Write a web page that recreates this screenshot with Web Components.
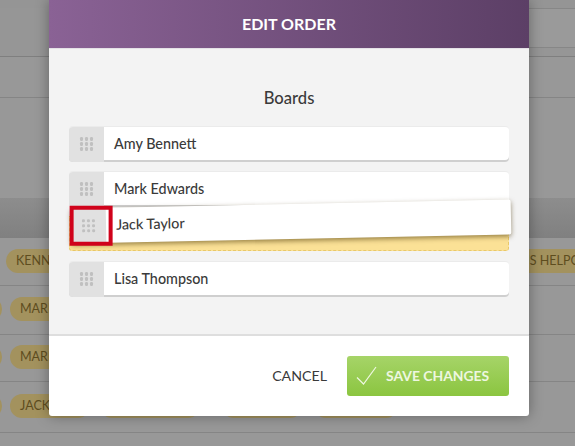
<!DOCTYPE html>
<html>
<head>
<meta charset="utf-8">
<style>
  html, body { margin: 0; padding: 0; background: #999; }
  body { width: 575px; height: 446px; overflow: hidden; font-family: Lato, sans-serif; }
</style>
</head>
<body>
<order-page>
  <bg-row slot="bg" h="8" kind="top"></bg-row>
  <bg-row slot="bg" h="49" kind="box"></bg-row>
  <bg-row slot="bg" h="41"></bg-row>
  <bg-row slot="bg" h="100" kind="plain"></bg-row>
  <bg-row slot="bg" h="40" kind="band"></bg-row>
  <bg-row slot="bg" h="48" pad="6" top="11">
    <bg-chip w="80">KENNEDY</bg-chip><bg-chip w="120" style="margin-left:411px">PLUS HELPCENTER</bg-chip>
  </bg-row>
  <bg-row slot="bg" h="49" top="11"><bg-chip w="24" style="margin-left:-22px"></bg-chip><bg-chip w="80" style="margin-left:8px">MARK</bg-chip></bg-row>
  <bg-row slot="bg" h="47" top="10"><bg-chip w="24" style="margin-left:-22px"></bg-chip><bg-chip w="80" style="margin-left:8px">MARK</bg-chip></bg-row>
  <bg-row slot="bg" h="51" top="12">
    <bg-chip w="24" style="margin-left:-22px"></bg-chip><bg-chip w="80" style="margin-left:8px">JACK</bg-chip><bg-chip w="100" style="margin-left:10px"></bg-chip><bg-chip w="80" style="margin-left:22px"></bg-chip><bg-chip w="84" style="margin-left:12px"></bg-chip>
  </bg-row>
  <bg-row slot="bg" h="13" kind="plain"></bg-row>

  <edit-modal slot="modal" heading="EDIT ORDER" subheading="Boards">
    <board-row>Amy Bennett</board-row>
    <board-row>Mark Edwards</board-row>
    <drop-slot>
      <drag-row>Jack Taylor</drag-row>
    </drop-slot>
    <board-row>Lisa Thompson</board-row>
    <save-button slot="actions">SAVE CHANGES</save-button>
  </edit-modal>
</order-page>

<script>
  class OrderPage extends HTMLElement {
    constructor() {
      super();
      this.attachShadow({ mode: 'open' });
      this.shadowRoot.innerHTML = `
        <style>
          :host { display: block; position: relative; width: 575px; height: 446px; overflow: hidden; background: #999; }
          .bg { display: flex; flex-direction: column; }
        </style>
        <div class="bg"><slot name="bg"></slot></div>
        <slot name="modal"></slot>
      `;
    }
  }

  class BgRow extends HTMLElement {
    constructor() {
      super();
      this.attachShadow({ mode: 'open' });
    }

    connectedCallback() {
      const h = this.getAttribute('h');
      const pad = this.getAttribute('pad') || 0;
      const top = this.getAttribute('top') || 0;
      const kind = this.getAttribute('kind') || 'row';
      this.shadowRoot.innerHTML = `
        <style>
          :host { display: block; box-sizing: border-box; height: ${h}px; overflow: hidden; background: #989898; }
          :host([kind="top"]) { background: #959595; }
          :host([kind="box"]) { background: #969696; border-bottom: 1px solid #7f7f7f; }
          :host([kind="row"]), :host(:not([kind])) { border-bottom: 1px solid #858585; }
          :host([kind="band"]) { background: linear-gradient(#8d8d8d, #808080); }
          .row { display: flex; align-items: flex-start; padding: ${top}px 0 0 ${pad}px; white-space: nowrap; }
          .box { margin: 0 0 0 500px; height: 38px; border: 1px solid #878787; border-right: 0; border-radius: 8px 0 0 8px; background: #9a9a9a; }
        </style>
        ${kind === 'box' ? '<div class="box"></div>' : '<div class="row"><slot></slot></div>'}
      `;
    }
  }

  class BgChip extends HTMLElement {
    constructor() {
      super();
      this.attachShadow({ mode: 'open' });
    }

    connectedCallback() {
      this.shadowRoot.innerHTML = `
        <style>
          :host { display: block; flex: none; box-sizing: border-box; width: ${this.getAttribute('w')}px; height: 24px; padding: 0 10px; border-radius: 12px; background: #a3925e; color: #5e4d1e; font: 12.5px/24px Lato, sans-serif; overflow: hidden; }
        </style>
        <slot></slot>
      `;
    }
  }

  class EditModal extends HTMLElement {
    constructor() {
      super();
      this.attachShadow({ mode: 'open' });
    }

    connectedCallback() {
      this.shadowRoot.innerHTML = `
        <style>
          :host { display: flex; flex-direction: column; position: absolute; left: 49px; top: 0; width: 480px; height: 416px; background: #fff; border-radius: 0 0 3px 3px; box-shadow: 0 0 14px rgba(0,0,0,.35); color: #333; }
          header { height: 49px; flex: none; box-sizing: border-box; border-bottom: 1px solid #e4e1e6; background: linear-gradient(90deg, #8a6295, #5c3f66); color: #fff; font: 700 16px/47px Lato, sans-serif; text-align: center; }
          .body { flex: 1; display: flex; flex-direction: column; gap: 9px; padding: 0 20px; background: #f3f3f3; border-bottom: 2px solid #dedede; }
          h2 { margin: 39px 0 9px; font: 500 16.6px/20px Lato, sans-serif; text-align: center; color: #3a3a3a; }
          footer { height: 80px; flex: none; display: flex; align-items: center; justify-content: flex-end; gap: 20px; padding-right: 20px; }
          .cancel { font: 400 14.2px/20px Lato, sans-serif; color: #3a3a3a; }
        </style>
        <header>${this.getAttribute('heading')}</header>
        <div class="body">
          <h2>${this.getAttribute('subheading')}</h2>
          <slot></slot>
        </div>
        <footer><span class="cancel">CANCEL</span><slot name="actions"></slot></footer>
      `;
    }
  }

  const rowStyles = `
    .handle { flex: none; width: 35px; display: flex; align-items: center; justify-content: center; background: #e1e1e1; }
    .dots { display: grid; grid-template-columns: repeat(3, 3.6px); grid-auto-rows: 3.6px; gap: 1.6px; }
    .dots i { background: #c0c0c0; border-radius: 1.2px; }
    .name { font: 500 14.35px/33px Lato, sans-serif; color: #3a3a3a; padding-left: 10px; }
  `;
  const handleHtml = `<div class="handle"><div class="dots">${'<i></i>'.repeat(9)}</div></div>`;

  class BoardRow extends HTMLElement {
    constructor() {
      super();
      this.attachShadow({ mode: 'open' });
      this.shadowRoot.innerHTML = `
        <style>
          :host { display: flex; box-sizing: border-box; height: 36px; background: #fff; border-radius: 4px; overflow: hidden; border-top: 1px solid #ebebeb; box-shadow: inset 0 -2px 0 #cfcfcf; }
          ${rowStyles}
          .handle { padding-bottom: 1px; }
        </style>
        ${handleHtml}
        <div class="name"><slot></slot></div>
      `;
    }
  }

  class DropSlot extends HTMLElement {
    constructor() {
      super();
      this.attachShadow({ mode: 'open' });
      this.shadowRoot.innerHTML = `
        <style>
          :host { display: block; position: relative; box-sizing: border-box; height: 35px; margin-bottom: 1px; background: #fbe196; border: 1px dashed #e9c869; border-top: 0; border-radius: 0 0 3px 3px; }
        </style>
        <slot></slot>
      `;
    }
  }

  // dragged copy of a row, floats tilted over the drop slot
  class DragRow extends HTMLElement {
    constructor() {
      super();
      this.attachShadow({ mode: 'open' });
      this.shadowRoot.innerHTML = `
        <style>
          :host { display: flex; position: absolute; left: 1px; top: -12px; width: 440px; height: 35px; background: #fff; transform: rotate(-1.2deg); border-radius: 2px; box-shadow: 0 2px 5px rgba(70,50,0,.55); }
          ${rowStyles}
          .name { padding-left: 10px; }
          .mark { position: absolute; left: -1px; top: -3px; width: 43px; height: 40px; box-sizing: border-box; border: 4px solid #d0021b; transform: rotate(1.2deg); transform-origin: 0 0; }
        </style>
        ${handleHtml}
        <div class="name"><slot></slot></div>
        <div class="mark"></div>
      `;
    }
  }

  class SaveButton extends HTMLElement {
    constructor() {
      super();
      this.attachShadow({ mode: 'open' });
      this.shadowRoot.innerHTML = `
        <style>
          :host { display: flex; align-items: center; box-sizing: border-box; width: 162px; height: 40px; padding-left: 9px; gap: 9px; border-radius: 3px; background: linear-gradient(#a6d468, #8bc540); color: #eef7e0; font: 700 13.9px/20px Lato, sans-serif; }
          svg { flex: none; display: block; }
        </style>
        <svg width="21" height="20" viewBox="0 0 21 20" fill="none" stroke="#eef7e0" stroke-width="1.2"><path d="M1 11.5l6.5 6.5L20 1"/></svg>
        <span><slot></slot></span>
      `;
    }
  }

  customElements.define('order-page', OrderPage);
  customElements.define('bg-row', BgRow);
  customElements.define('bg-chip', BgChip);
  customElements.define('edit-modal', EditModal);
  customElements.define('board-row', BoardRow);
  customElements.define('drop-slot', DropSlot);
  customElements.define('drag-row', DragRow);
  customElements.define('save-button', SaveButton);
</script>
</body>
</html>
